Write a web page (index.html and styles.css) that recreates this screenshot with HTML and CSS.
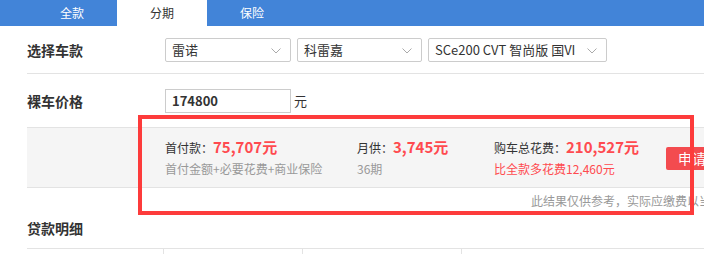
FILE: index.html
```html
<!doctype html>
<html>
<head>
  <meta charset="utf-8">
  <title>贷款计算器</title>
  <link rel="stylesheet" href="styles.css">
</head>
<body>
  <div id="page">
    <div class="tabs">
      <div class="tab">全款</div>
      <div class="tab active">分期</div>
      <div class="tab">保险</div>
    </div>

    <div class="form">
      <div class="row row-car">
        <div class="label">选择车款</div>
        <div class="select w-brand">雷诺<svg class="arrow" viewBox="0 0 10 6"><path d="M0.5 0.5L5 5L9.5 0.5" /></svg></div>
        <div class="select w-series">科雷嘉<svg class="arrow" viewBox="0 0 10 6"><path d="M0.5 0.5L5 5L9.5 0.5" /></svg></div>
        <div class="select w-model">SCe200 CVT 智尚版 国VI<svg class="arrow" viewBox="0 0 10 6"><path d="M0.5 0.5L5 5L9.5 0.5" /></svg></div>
      </div>
      <div class="row row-price">
        <div class="label">裸车价格</div>
        <div class="input">174800</div>
        <span class="unit">元</span>
      </div>

      <div class="result">
        <div class="item item-first">
          <div class="main">首付款：<b>75,707元</b></div>
          <div class="sub">首付金额+必要花费+商业保险</div>
        </div>
        <div class="item item-month">
          <div class="main">月供：<b>3,745元</b></div>
          <div class="sub">36期</div>
        </div>
        <div class="item item-total">
          <div class="main">购车总花费：<b>210,527元</b></div>
          <div class="sub red">比全款多花费12,460元</div>
        </div>
        <button class="apply">申请贷款</button>
      </div>
      <div class="note">此结果仅供参考，实际应缴费以当地为准</div>

      <h3 class="detail-title">贷款明细</h3>
      <div class="table">
        <div class="col c1"></div>
        <div class="col c2"></div>
        <div class="col c3"></div>
        <div class="col c4"></div>
      </div>
    </div>

    <div class="mark"></div>
  </div>
</body>
</html>
```

FILE: styles.css
```css
html, body {
  margin: 0;
  padding: 0;
  overflow: hidden;
}

body {
  font-family: "Noto Sans CJK SC", "Noto Sans", sans-serif;
  font-size: 12px;
  color: #333;
  background: #fff;
}

#page {
  position: relative;
  width: 900px;
  height: 254px;
  overflow: hidden;
}

.tabs {
  display: flex;
  height: 26px;
  padding-left: 27px;
  background: #4284d8;
}
.tab {
  width: 90px;
  line-height: 26px;
  text-align: center;
  color: #fff;
}
.tab.active {
  background: #fff;
  color: #333;
}

.form {
  padding-left: 27px;
}

.row {
  display: flex;
  align-items: center;
}
.row-car {
  height: 47px;
  border-bottom: 1px solid #e3e3e3;
}
.row-price {
  height: 53px;
}
.label {
  width: 138px;
  font-size: 14px;
  font-weight: bold;
}

.select {
  position: relative;
  box-sizing: border-box;
  height: 24px;
  line-height: 22px;
  margin-right: 6px;
  padding-left: 6px;
  border: 1px solid #ccc;
  border-radius: 2px;
  font-size: 13px;
}
.w-brand { width: 126px; }
.w-series { width: 125px; }
.w-model { width: 179px; }
.arrow {
  position: absolute;
  right: 9px;
  top: 9px;
  width: 10px;
  height: 6px;
  fill: none;
  stroke: #aaa;
  stroke-width: 1;
}

.input {
  box-sizing: border-box;
  width: 126px;
  height: 24px;
  line-height: 22px;
  padding-left: 6px;
  border: 1px solid #ccc;
  font-size: 13px;
  font-weight: bold;
}
.unit {
  margin-left: 3px;
  font-size: 13px;
}

.result {
  display: flex;
  align-items: center;
  height: 59px;
  padding-left: 138px;
  background: #f5f5f5;
  border-top: 1px solid #e3e3e3;
  border-bottom: 1px solid #e3e3e3;
}
.item-first { width: 192px; }
.item-month { width: 137px; }
.item-total { width: 172px; }
.main {
  line-height: 20px;
}
.main b {
  font-size: 15px;
  color: #ff4a4f;
}
.sub {
  margin-top: 2px;
  line-height: 18px;
  color: #999;
}
.sub.red {
  color: #ff4a4f;
}
.apply {
  height: 23px;
  padding: 0 12px;
  border: 0;
  border-radius: 2px;
  background: #f34b4f;
  color: #fff;
  font-family: inherit;
  font-size: 14px;
  line-height: 23px;
  margin-top: 2px;
}

.note {
  padding: 4px 0 0 504px;
  line-height: 18px;
  color: #999;
  white-space: nowrap;
}

.detail-title {
  margin: 0;
  padding-top: 8px;
  height: 30px;
  line-height: 20px;
  font-size: 14px;
}

.table {
  display: flex;
  height: 20px;
  border-top: 1px solid #e3e3e3;
}
.col {
  border-right: 1px solid #e3e3e3;
}
.c1 { width: 136px; }
.c2 { width: 138px; }
.c3 { width: 158px; }
.c4 { width: 200px; border-right: 0; }

/* annotation frame over the result block */
.mark {
  position: absolute;
  left: 138px;
  top: 115px;
  width: 548px;
  height: 92px;
  border: 4px solid #fd3b3b;
}
```
